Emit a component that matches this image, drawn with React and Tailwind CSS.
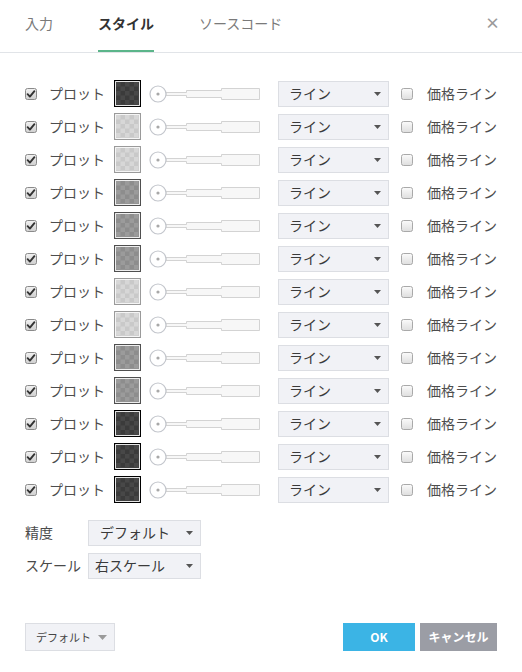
import React from "react";

const FONT = { fontFamily: '"Noto Sans CJK JP", "Noto Sans", sans-serif' };

const SWATCH = {
  dark: { border: "#000000", a: "#3b3b3b", b: "#484848" },
  light: { border: "#9a9a9a", a: "#c9c9c9", b: "#d7d7d7" },
  mid: { border: "#4f4f4f", a: "#8d8d8d", b: "#9b9b9b" },
};

const plots = ["dark", "light", "light", "mid", "mid", "mid", "light", "light", "mid", "mid", "dark", "dark", "dark"];

function Check({ checked }) {
  return (
    <svg width="12" height="12" viewBox="0 0 12 12" className="shrink-0">
      <defs>
        <linearGradient id={checked ? "cbOn" : "cbOff"} x1="0" y1="0" x2="0" y2="1">
          <stop offset="0" stopColor={checked ? "#f2f2f2" : "#fbfbfb"} />
          <stop offset="1" stopColor={checked ? "#cfcfcf" : "#dedede"} />
        </linearGradient>
      </defs>
      <rect x="0.5" y="0.5" width="11" height="11" rx="2" fill={`url(#${checked ? "cbOn" : "cbOff"})`} stroke={checked ? "#8a8a8a" : "#a9a9a9"} />
      {checked && <path d="M2.6 6.2 L4.9 8.6 L9.4 3.2" fill="none" stroke="#333" strokeWidth="1.9" strokeLinecap="round" strokeLinejoin="round" />}
    </svg>
  );
}

function Swatch({ kind, id }) {
  const c = SWATCH[kind];
  return (
    <svg width="27" height="27" viewBox="0 0 27 27" className="shrink-0">
      <defs>
        <pattern id={`chk${id}`} width="9" height="9" patternUnits="userSpaceOnUse" x="2" y="2">
          <rect width="9" height="9" fill={c.a} />
          <rect width="4.5" height="4.5" fill={c.b} />
          <rect x="4.5" y="4.5" width="4.5" height="4.5" fill={c.b} />
        </pattern>
      </defs>
      <rect x="0.5" y="0.5" width="26" height="26" fill="#fff" stroke={c.border} strokeWidth="1.2" />
      <rect x="2" y="2" width="23" height="23" fill={`url(#chk${id})`} />
    </svg>
  );
}

function Slider() {
  return (
    <svg width="111" height="22" viewBox="0 0 111 22" className="shrink-0">
      <path d="M17 9.5 H37.5 V7.5 H72.5 V5.5 H110.5 V16.5 H72.5 V14.5 H37.5 V12.5 H17 Z" fill="#f7f7f7" stroke="#d3d3d3" />
      <circle cx="9" cy="11" r="8" fill="#fff" stroke="#c3c6cc" strokeWidth="1.2" />
      <circle cx="9" cy="11" r="1.6" fill="#a8a8a8" />
    </svg>
  );
}

function Caret({ color = "#555" }) {
  return (
    <svg width="7" height="4" viewBox="0 0 7 4" className="shrink-0">
      <path d="M0 0 H7 L3.5 4 Z" fill={color} />
    </svg>
  );
}

function Select({ label, width, pad = "pl-[10px]" }) {
  return (
    <div className={`flex h-[26px] items-center justify-between border border-[#dcdee3] bg-[#f1f2f6] pr-[7px] text-[14px] text-[#3a3a3a] ${pad}`} style={{ width }}>
      <span>{label}</span>
      <Caret />
    </div>
  );
}

export default function App() {
  return (
    <div className="h-[672px] w-[522px] bg-white text-[#4a4a4a]" style={FONT}>
      <div className="flex h-[53px] items-stretch border-b border-[#e1e4e8] pl-[25px] pr-[22px]">
        <div className="flex gap-[45px] text-[14px]">
          <div className="flex items-center pb-[5px] text-[#7a7a7a]">入力</div>
          <div className="flex items-center border-b-2 border-[#5bb58a] pb-[3px] font-bold text-[#333]">スタイル</div>
          <div className="flex items-center pb-[5px] text-[#7a7a7a]">ソースコード</div>
        </div>
        <div className="ml-auto flex items-center pb-[5px] text-[15px] font-bold text-[#9a9a9a]">×</div>
      </div>

      <div className="mt-[24px] pl-[25px]">
        {plots.map((k, i) => (
          <div key={i} className="flex h-[33px] items-center">
            <Check checked />
            <span className="ml-[12px] w-[65px] text-[14px] text-[#4d4d4d]">プロット</span>
            <Swatch kind={k} id={i} />
            <div className="ml-[8px]">
              <Slider />
            </div>
            <div className="ml-[18px]">
              <Select label="ライン" width={111} />
            </div>
            <div className="ml-[12px]">
              <Check checked={false} />
            </div>
            <span className="ml-[14px] text-[14px] text-[#4d4d4d]">価格ライン</span>
          </div>
        ))}
      </div>

      <div className="mt-[10px] pl-[25px]">
        <div className="flex h-[33px] items-center">
          <span className="w-[63px] text-[14px]">精度</span>
          <Select label="デフォルト" width={113} pad="pl-[11px]" />
        </div>
        <div className="flex h-[33px] items-center">
          <span className="w-[63px] text-[14px]">スケール</span>
          <Select label="右スケール" width={113} pad="pl-[6px]" />
        </div>
      </div>

      <div className="mt-[41px] flex items-center px-[25px]">
        <div className="flex h-[28px] w-[90px] items-center gap-[7px] border border-[#dcdee3] bg-[#f1f2f6] pl-[10px] text-[11px] text-[#444]">
          <span>デフォルト</span>
          <svg width="9" height="5" viewBox="0 0 9 5"><path d="M0 0 H9 L4.5 5 Z" fill="#9a9a9a" /></svg>
        </div>
        <div className="ml-auto flex gap-[5px]">
          <div className="flex h-[28px] w-[72px] items-center justify-center bg-[#3bb4e5] text-[12px] font-bold text-white">OK</div>
          <div className="flex h-[28px] w-[77px] items-center justify-center bg-[#9b9da5] text-[12px] font-bold text-white">キャンセル</div>
        </div>
      </div>
    </div>
  );
}
